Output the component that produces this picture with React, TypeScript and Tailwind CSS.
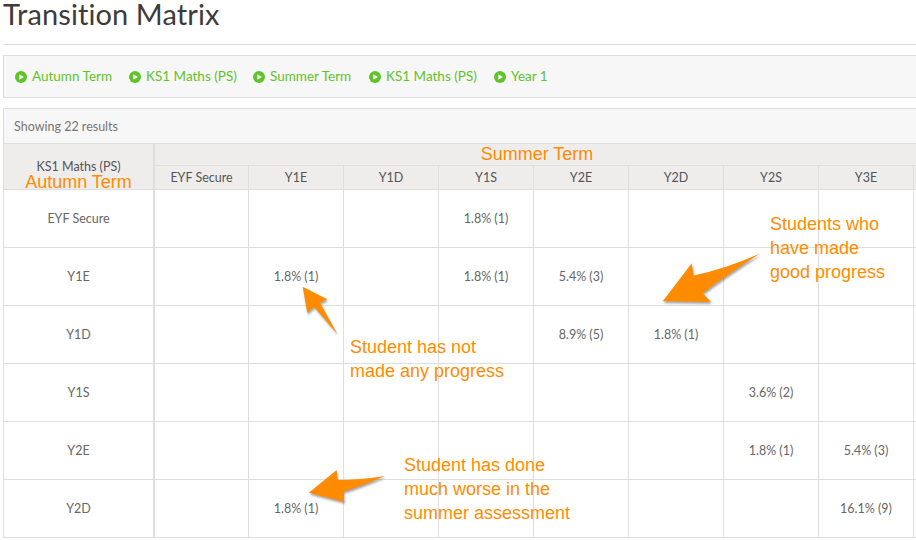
const columns = ["EYF Secure", "Y1E", "Y1D", "Y1S", "Y2E", "Y2D", "Y2S", "Y3E", ""]

const rows: { label: string; cells: Record<number, string> }[] = [
  { label: "EYF Secure", cells: { 3: "1.8% (1)" } },
  { label: "Y1E", cells: { 1: "1.8% (1)", 3: "1.8% (1)", 4: "5.4% (3)" } },
  { label: "Y1D", cells: { 4: "8.9% (5)", 5: "1.8% (1)" } },
  { label: "Y1S", cells: { 6: "3.6% (2)" } },
  { label: "Y2E", cells: { 6: "1.8% (1)", 7: "5.4% (3)" } },
  { label: "Y2D", cells: { 1: "1.8% (1)", 7: "16.1% (9)" } },
]

const crumbs = [
  { label: "Autumn Term", width: "w-[114px]" },
  { label: "KS1 Maths (PS)", width: "w-[124px]" },
  { label: "Summer Term", width: "w-[116px]" },
  { label: "KS1 Maths (PS)", width: "w-[125px]" },
  { label: "Year 1", width: "w-[60px]" },
]

const notes = [
  { className: "left-[770px] top-[212px]", lines: ["Students who", "have made", "good progress"] },
  { className: "left-[350px] top-[335px]", lines: ["Student has not", "made any progress"] },
  { className: "left-[404px] top-[453px]", lines: ["Student has done", "much worse in the", "summer assessment"] },
]

function PlayIcon() {
  return (
    <svg width="12" height="12" viewBox="0 0 12 12" className="shrink-0">
      <circle cx="6" cy="6" r="6" fill="#5fc32a" />
      <path d="M4.3 3.2 L8.9 6 L4.3 8.8 Z" fill="#fff" />
    </svg>
  )
}

export default function App() {
  return (
    <div className="relative h-[540px] w-[916px] overflow-hidden bg-white pl-[3px] font-['Lato',sans-serif] text-[#666]">
      <header className="h-[45px] border-b border-[#dedede]">
        <h1 className="text-[29px] leading-[27px] tracking-[0.1px] text-[#3f3b3a]">Transition Matrix</h1>
      </header>

      <nav className="mt-[10px] flex h-[43px] w-[920px] items-center border border-[#dedede] bg-[#f7f7f7] pl-[11px] text-[13.5px] text-[#5fc32a]">
        {crumbs.map((crumb, i) => (
          <div key={i} className={`flex items-center gap-[5px] ${crumb.width}`}>
            <PlayIcon />
            <span>{crumb.label}</span>
          </div>
        ))}
      </nav>

      <section className="mt-[10px] w-[920px] border-l border-[#dedede]">
        <div className="flex h-[36px] items-center border-y border-[#dedede] bg-[#f7f7f7] pt-[3px] pl-[10px] text-[12.5px] text-[#7a7472]">
          Showing 22 results
        </div>

        <div className="grid grid-cols-[151px_94px_repeat(7,95px)_9px] grid-rows-[22px_24px]">
          <div className="row-span-2 flex flex-col items-center justify-end border-r-2 border-b border-[#dedede] bg-[#eeedec] text-[12.5px] text-[#555]">
            <span className="leading-[16px]">KS1 Maths (PS)</span>
            <span className="font-['Liberation_Sans',sans-serif] text-[18px] leading-[14px] text-[#ff8c00]">Autumn Term</span>
          </div>
          <div className="col-span-9 flex items-center justify-center border-b border-[#dedede] bg-[#eeedec] pr-[4px] font-['Liberation_Sans',sans-serif] text-[18px] text-[#ff8c00]">
            Summer Term
          </div>
          {columns.map((col, i) => (
            <div key={i} className="flex items-center justify-center border-r border-b border-[#dedede] bg-[#eeedec] pt-[2px] text-[12.5px] text-[#555]">
              {col}
            </div>
          ))}

          {rows.map((row) => (
            <div key={row.label} className="col-span-10 grid h-[58px] grid-cols-subgrid border-b border-[#dedede] first:h-[57px]">
              <div className="flex items-center justify-center border-r-2 border-[#dedede] pt-[2px] text-[12.5px]">{row.label}</div>
              {columns.map((_, i) => (
                <div key={i} className="flex items-center justify-center border-r border-[#dedede] pt-[2px] text-[12.5px]">
                  {row.cells[i]}
                </div>
              ))}
            </div>
          ))}
        </div>
      </section>

      <svg className="absolute top-0 left-0 drop-shadow-[1px_2px_1px_rgba(0,0,0,0.35)]" width="916" height="540" viewBox="0 0 916 540">
        <path d="M760 253.5 Q725 269 693.5 275.5 L691.7 263.3 L662.7 301.3 L711 302 L702.7 293.3 Q725 276 760 253.5 Z" fill="#ff8c00" />
        <path d="M302.7 286.7 L327.3 299.3 L320 302.7 L337.3 334 L314 306.7 L307.3 313.3 Z" fill="#ff8c00" />
        <path d="M308.7 492.7 L336.7 470 L337.3 480 Q360 480 385 476 Q362 486 343.3 491.7 L344 502 Z" fill="#ff8c00" />
      </svg>

      {notes.map((note) => (
        <div key={note.lines[0]} className={`absolute font-['Liberation_Sans',sans-serif] text-[18px] leading-[24px] text-[#ff8c00] ${note.className}`}>
          {note.lines.map((line) => (
            <div key={line}>{line}</div>
          ))}
        </div>
      ))}
    </div>
  )
}
